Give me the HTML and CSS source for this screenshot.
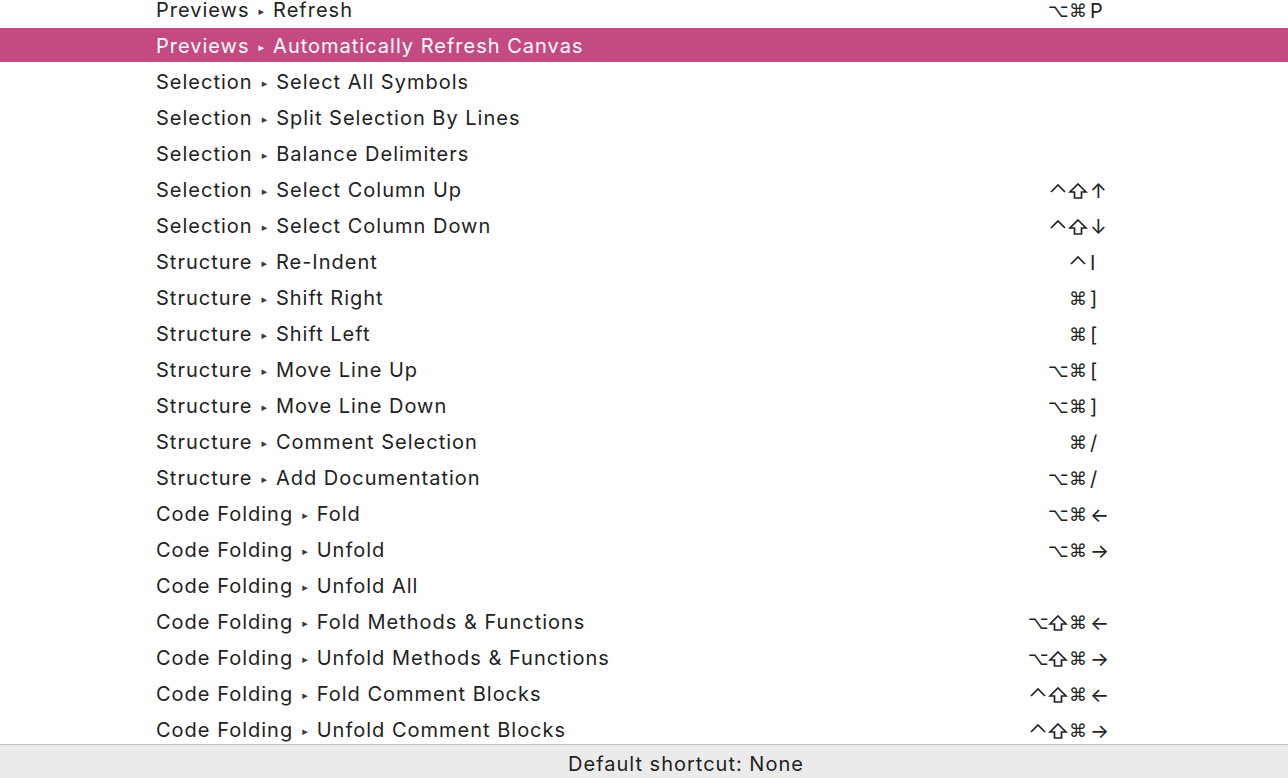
FILE: index.html
```html
<!DOCTYPE html>
<html>
<head>
<meta charset="utf-8">
<link rel="stylesheet" href="styles.css">
</head>
<body>
<div class="window">
  <div class="list">
    <div class="row"><span class="name">Previews<span class="sep">▸</span>Refresh</span><span class="mods"><i class="g">⌥</i><i class="g">⌘</i></span><span class="key">P</span></div>
    <div class="row selected"><span class="name">Previews<span class="sep">▸</span>Automatically Refresh Canvas</span><span class="mods"></span><span class="key"></span></div>
    <div class="row"><span class="name">Selection<span class="sep">▸</span>Select All Symbols</span><span class="mods"></span><span class="key"></span></div>
    <div class="row"><span class="name">Selection<span class="sep">▸</span>Split Selection By Lines</span><span class="mods"></span><span class="key"></span></div>
    <div class="row"><span class="name">Selection<span class="sep">▸</span>Balance Delimiters</span><span class="mods"></span><span class="key"></span></div>
    <div class="row"><span class="name">Selection<span class="sep">▸</span>Select Column Up</span><span class="mods"><svg class="ic" viewBox="0 0 20 18"><polyline points="3,10 10,3 17,10"/></svg><svg class="ic" viewBox="0 0 20 18"><path d="M10 2 L18 10 H13.5 V16 H6.5 V10 H2 Z"/></svg></span><span class="key">↑</span></div>
    <div class="row"><span class="name">Selection<span class="sep">▸</span>Select Column Down</span><span class="mods"><svg class="ic" viewBox="0 0 20 18"><polyline points="3,10 10,3 17,10"/></svg><svg class="ic" viewBox="0 0 20 18"><path d="M10 2 L18 10 H13.5 V16 H6.5 V10 H2 Z"/></svg></span><span class="key">↓</span></div>
    <div class="row"><span class="name">Structure<span class="sep">▸</span>Re-Indent</span><span class="mods"><svg class="ic" viewBox="0 0 20 18"><polyline points="3,10 10,3 17,10"/></svg></span><span class="key">I</span></div>
    <div class="row"><span class="name">Structure<span class="sep">▸</span>Shift Right</span><span class="mods"><i class="g">⌘</i></span><span class="key">]</span></div>
    <div class="row"><span class="name">Structure<span class="sep">▸</span>Shift Left</span><span class="mods"><i class="g">⌘</i></span><span class="key">[</span></div>
    <div class="row"><span class="name">Structure<span class="sep">▸</span>Move Line Up</span><span class="mods"><i class="g">⌥</i><i class="g">⌘</i></span><span class="key">[</span></div>
    <div class="row"><span class="name">Structure<span class="sep">▸</span>Move Line Down</span><span class="mods"><i class="g">⌥</i><i class="g">⌘</i></span><span class="key">]</span></div>
    <div class="row"><span class="name">Structure<span class="sep">▸</span>Comment Selection</span><span class="mods"><i class="g">⌘</i></span><span class="key">/</span></div>
    <div class="row"><span class="name">Structure<span class="sep">▸</span>Add Documentation</span><span class="mods"><i class="g">⌥</i><i class="g">⌘</i></span><span class="key">/</span></div>
    <div class="row"><span class="name">Code Folding<span class="sep">▸</span>Fold</span><span class="mods"><i class="g">⌥</i><i class="g">⌘</i></span><span class="key">←</span></div>
    <div class="row"><span class="name">Code Folding<span class="sep">▸</span>Unfold</span><span class="mods"><i class="g">⌥</i><i class="g">⌘</i></span><span class="key">→</span></div>
    <div class="row"><span class="name">Code Folding<span class="sep">▸</span>Unfold All</span><span class="mods"></span><span class="key"></span></div>
    <div class="row"><span class="name">Code Folding<span class="sep">▸</span>Fold Methods &amp; Functions</span><span class="mods"><i class="g">⌥</i><svg class="ic" viewBox="0 0 20 18"><path d="M10 2 L18 10 H13.5 V16 H6.5 V10 H2 Z"/></svg><i class="g">⌘</i></span><span class="key">←</span></div>
    <div class="row"><span class="name">Code Folding<span class="sep">▸</span>Unfold Methods &amp; Functions</span><span class="mods"><i class="g">⌥</i><svg class="ic" viewBox="0 0 20 18"><path d="M10 2 L18 10 H13.5 V16 H6.5 V10 H2 Z"/></svg><i class="g">⌘</i></span><span class="key">→</span></div>
    <div class="row"><span class="name">Code Folding<span class="sep">▸</span>Fold Comment Blocks</span><span class="mods"><svg class="ic" viewBox="0 0 20 18"><polyline points="3,10 10,3 17,10"/></svg><svg class="ic" viewBox="0 0 20 18"><path d="M10 2 L18 10 H13.5 V16 H6.5 V10 H2 Z"/></svg><i class="g">⌘</i></span><span class="key">←</span></div>
    <div class="row"><span class="name">Code Folding<span class="sep">▸</span>Unfold Comment Blocks</span><span class="mods"><svg class="ic" viewBox="0 0 20 18"><polyline points="3,10 10,3 17,10"/></svg><svg class="ic" viewBox="0 0 20 18"><path d="M10 2 L18 10 H13.5 V16 H6.5 V10 H2 Z"/></svg><i class="g">⌘</i></span><span class="key">→</span></div>
  </div>
  <div class="footer">Default shortcut: None</div>
</div>
</body>
</html>
```

FILE: styles.css
```css
* { box-sizing: border-box; }
html, body {
  margin: 0;
  padding: 0;
  width: 1288px;
  height: 778px;
  overflow: hidden;
  background: #ffffff;
}
.window {
  display: flex;
  flex-direction: column;
  height: 778px;
  font-family: Inter, "Noto Sans", "DejaVu Sans", sans-serif;
  color: #222222;
}
.list {
  flex: 1;
  overflow: hidden;
  display: flex;
  flex-direction: column;
  gap: 2px;
  margin-top: -8px;
}
.row {
  flex: 0 0 34px;
  height: 34px;
  display: grid;
  grid-template-columns: 156px 842px 90px 1fr;
  align-items: center;
  font-size: 20px;
  line-height: 34px;
  padding-top: 1px;
  letter-spacing: 1px;
}
.row.selected {
  background: #c64a82;
  color: #ffffff;
}
.row.selected .sep { color: #ffffff; }
.name {
  grid-column: 2;
  white-space: nowrap;
}
.sep {
  font-size: 11px;
  color: #3a3a3a;
  display: inline-block;
  margin: 0 9px 0 9px;
  letter-spacing: 0;
  vertical-align: 2px;
}
.mods {
  grid-column: 3;
  display: flex;
  justify-content: flex-end;
  align-items: center;
  height: 34px;
}
.g {
  font-style: normal;
  display: inline-block;
  width: 20px;
  text-align: center;
  font-family: "DejaVu Sans", sans-serif;
  font-size: 18px;
  letter-spacing: 0;
  line-height: 34px;
  overflow: hidden;
}
.ic {
  width: 20px;
  height: 18px;
  fill: none;
  stroke: #222222;
  stroke-width: 1.7;
  stroke-linejoin: miter;
  margin-top: 1px;
}
.key {
  grid-column: 4;
  text-align: left;
  padding-left: 2px;
  font-family: Inter, "DejaVu Sans", sans-serif;
  font-size: 20px;
  letter-spacing: 0;
}
.footer {
  flex: 0 0 34px;
  height: 34px;
  border-top: 1px solid #c0c0c0;
  background: #ebebeb;
  text-align: center;
  padding-left: 84px;
  font-size: 20px;
  line-height: 38px;
  letter-spacing: 1px;
  color: #222222;
}
```
